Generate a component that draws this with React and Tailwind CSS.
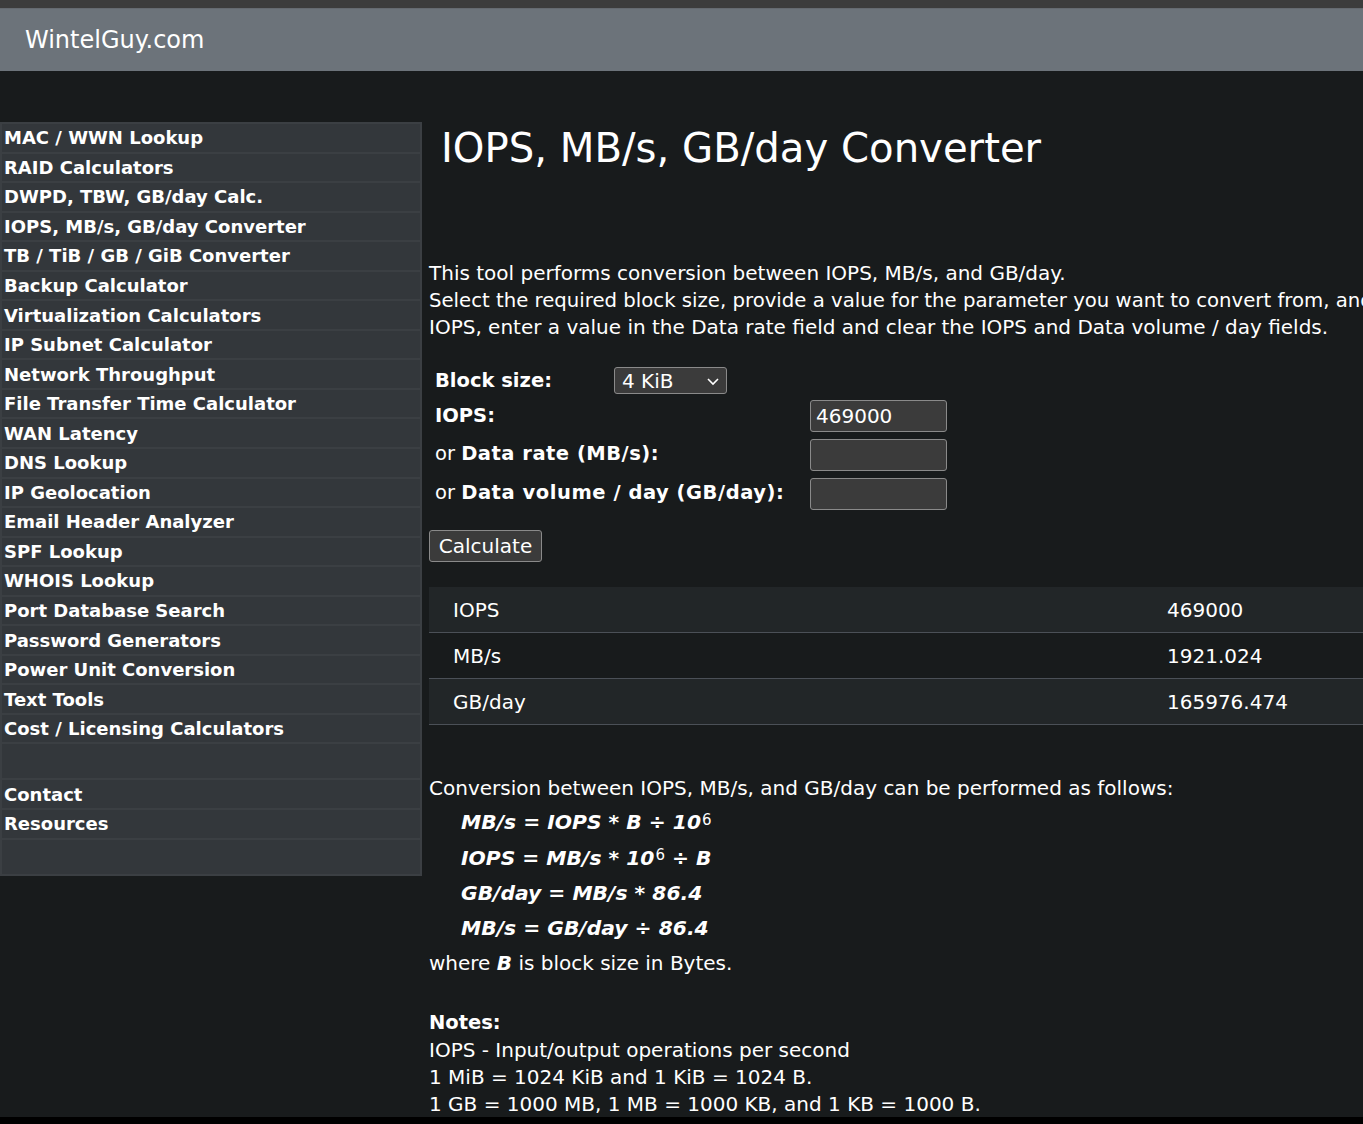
import React from "react";

const BODY = { fontFamily: '"DejaVu Sans",Verdana,sans-serif' };
const BOLD = { fontFamily: '"DejaVu Sans",Verdana,sans-serif' };

const NAV = [
  "MAC / WWN Lookup",
  "RAID Calculators",
  "DWPD, TBW, GB/day Calc.",
  "IOPS, MB/s, GB/day Converter",
  "TB / TiB / GB / GiB Converter",
  "Backup Calculator",
  "Virtualization Calculators",
  "IP Subnet Calculator",
  "Network Throughput",
  "File Transfer Time Calculator",
  "WAN Latency",
  "DNS Lookup",
  "IP Geolocation",
  "Email Header Analyzer",
  "SPF Lookup",
  "WHOIS Lookup",
  "Port Database Search",
  "Password Generators",
  "Power Unit Conversion",
  "Text Tools",
  "Cost / Licensing Calculators",
];

function NavRow({ children }) {
  return (
    <div className="h-[27.55px] bg-[#33373b] flex items-center pl-[2px] text-[18px] font-bold text-white whitespace-nowrap" style={BOLD}>
      {children}
    </div>
  );
}

function Sidebar() {
  return (
    <div className="w-[422px] shrink-0 self-start bg-[#3b3f43] p-[2px] flex flex-col gap-[2px]">
      {NAV.map((n) => (
        <NavRow key={n}>{n}</NavRow>
      ))}
      <div className="h-[34px] bg-[#33373b]" />
      <NavRow>Contact</NavRow>
      <NavRow>Resources</NavRow>
      <div className="h-[34px] bg-[#33373b]" />
    </div>
  );
}

function Formula({ children }) {
  return (
    <div className="h-[35.3px] flex items-center pl-[32px] text-[20.3px] font-bold italic whitespace-nowrap" style={BOLD}>
      {children}
    </div>
  );
}

function Sup() {
  return <sup className="text-[15px] font-normal not-italic relative -top-[3px] ml-[1px]">6</sup>;
}

export default function App() {
  return (
    <div className="relative w-[1363px] h-[1124px] overflow-hidden bg-[#181b1c] text-white flex flex-col" style={BODY}>
      <div className="h-[8px] bg-[#3c3c3c] shrink-0" />
      <div className="h-[63px] bg-[#6c737a] shrink-0 flex items-center pl-[25px] border-t border-[#656a70]">
        <span className="text-[24px] text-white">WintelGuy.com</span>
      </div>
      <div className="flex pt-[51px]">
        <Sidebar />
        <div className="ml-[7px] w-[1100px] shrink-0 flex flex-col text-[20px]">
          <h1 className="pl-[12px] pt-[2px] text-[40.2px] leading-[48px] font-normal whitespace-nowrap">
            IOPS, MB/s, GB/day Converter
          </h1>
          <div className="mt-[88px] leading-[27px] whitespace-nowrap">
            <div>This tool performs conversion between IOPS, MB/s, and GB/day.</div>
            <div className="text-[19.7px]">Select the required block size, provide a value for the parameter you want to convert from, and</div>
            <div>IOPS, enter a value in the Data rate field and clear the IOPS and Data volume / day fields.</div>
          </div>

          <div className="mt-[26px] flex flex-col pl-[6px]">
            <div className="h-[27px] flex items-center">
              <span className="w-[179px] font-bold text-[19.5px]" style={BOLD}>Block size:</span>
              <div className="w-[113px] h-[27px] bg-[#3b3b3b] border border-[#8a8a8a] rounded-[3px] flex items-center justify-between pl-[7px] pr-[5px]">
                <span className="text-[20px]">4 KiB</span>
                <svg width="16" height="16" viewBox="0 0 16 16" fill="none" stroke="white" strokeWidth="1.6">
                  <path d="M3 6 L8 11 L13 6" />
                </svg>
              </div>
            </div>
            <div className="mt-[6px] h-[32px] flex items-center">
              <span className="w-[375px] font-bold text-[19.5px]" style={BOLD}>IOPS:</span>
              <input
                readOnly
                value="469000"
                className="w-[137px] h-[32px] bg-[#3b3b3b] border border-[#8a8a8a] rounded-[3px] px-[5px] text-[20px] text-white outline-none"
                style={BODY}
              />
            </div>
            <div className="mt-[7px] h-[32px] flex items-center">
              <span className="w-[375px] text-[19.5px] whitespace-nowrap -mt-[3px]">
                or <b className="font-bold tracking-[0.5px]" style={BOLD}>Data rate (MB/s):</b>
              </span>
              <input
                readOnly
                value=""
                className="w-[137px] h-[32px] bg-[#3b3b3b] border border-[#8a8a8a] rounded-[3px] px-[5px] text-[20px] text-white outline-none"
              />
            </div>
            <div className="mt-[7px] h-[32px] flex items-center">
              <span className="w-[375px] text-[19.5px] whitespace-nowrap -mt-[3px]">
                or <b className="font-bold tracking-[0.55px]" style={BOLD}>Data volume / day (GB/day):</b>
              </span>
              <input
                readOnly
                value=""
                className="w-[137px] h-[32px] bg-[#3b3b3b] border border-[#8a8a8a] rounded-[3px] px-[5px] text-[20px] text-white outline-none"
              />
            </div>
          </div>

          <div className="mt-[20px]">
            <button className="w-[113px] h-[32px] bg-[#3b3b3b] border border-[#8a8a8a] rounded-[3px] text-[20px] text-white flex items-center justify-center">
              Calculate
            </button>
          </div>

          <div className="mt-[25px] flex flex-col">
            {[
              ["IOPS", "469000", "bg-[#222628]"],
              ["MB/s", "1921.024", "bg-[#181b1c]"],
              ["GB/day", "165976.474", "bg-[#222628]"],
            ].map(([k, v, bg]) => (
              <div key={k} className={`h-[46px] flex items-center border-b border-[#4b5057] ${bg}`}>
                <span className="w-[738px] pl-[24px]">{k}</span>
                <span>{v}</span>
              </div>
            ))}
          </div>

          <div className="mt-[50px] leading-[27px] whitespace-nowrap">
            Conversion between IOPS, MB/s, and GB/day can be performed as follows:
          </div>
          <div className="mt-[3px] flex flex-col">
            <Formula>
              MB/s = IOPS * B ÷ 10<Sup />
            </Formula>
            <Formula>
              IOPS = MB/s * 10<Sup />
              {"\u00a0÷ B"}
            </Formula>
            <Formula>GB/day = MB/s * 86.4</Formula>
            <Formula>MB/s = GB/day ÷ 86.4</Formula>
          </div>
          <div className="leading-[27px] whitespace-nowrap mt-[4px]">
            where <b className="font-bold italic" style={BOLD}>B</b> is block size in Bytes.
          </div>

          <div className="mt-[33px] leading-[27px] whitespace-nowrap">
            <div className="font-bold text-[19.5px] leading-[26px] mb-[1px]" style={BOLD}>Notes:</div>
            <div>IOPS - Input/output operations per second</div>
            <div>1 MiB = 1024 KiB and 1 KiB = 1024 B.</div>
            <div>1 GB = 1000 MB, 1 MB = 1000 KB, and 1 KB = 1000 B.</div>
          </div>
        </div>
      </div>
      <div className="absolute left-0 bottom-0 w-full h-[7px] bg-black" />
    </div>
  );
}
